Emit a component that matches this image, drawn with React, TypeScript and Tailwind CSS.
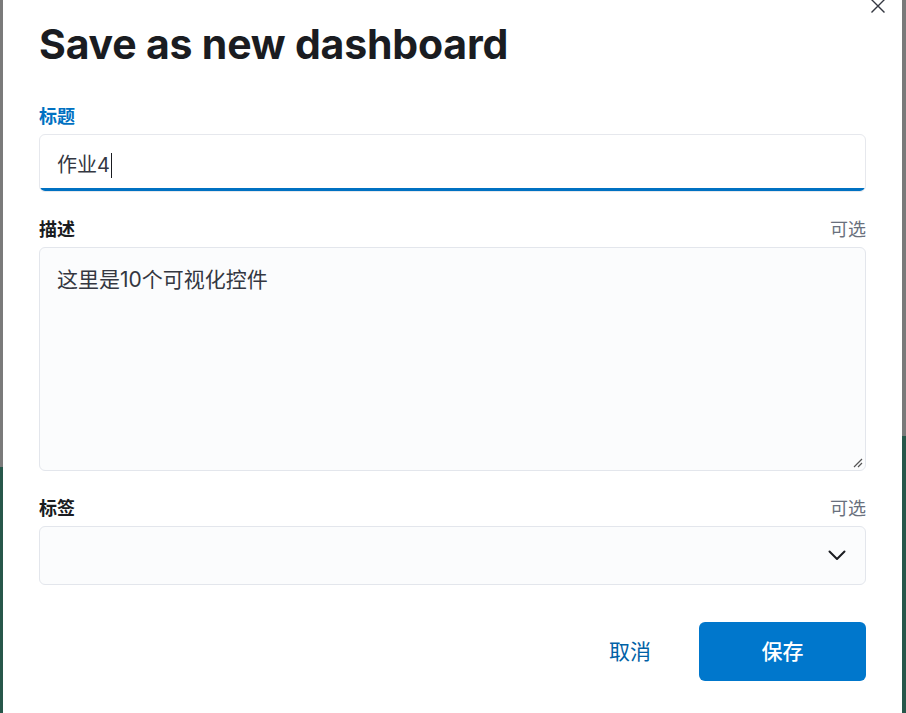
import React from "react";

const font = { fontFamily: "Inter, 'Noto Sans CJK SC', 'Noto Sans', sans-serif" };

export default function App() {
  return (
    <div className="w-[906px] h-[713px] flex overflow-hidden bg-white" style={font}>
      <div className="w-[3px] flex flex-col">
        <div className="h-[467px] bg-[#7a7a7a]" />
        <div className="flex-1 bg-[#27574a]" />
      </div>
      <div className="w-[899px] h-full bg-white relative px-[36px] pt-[20px]">
        <button className="absolute right-[16px] top-[-2px] w-[16px] h-[16px] flex items-center justify-center">
          <svg width="16" height="16" viewBox="0 0 16 16">
            <path d="M1.5 1.5 L14.5 14.5 M14.5 1.5 L1.5 14.5" stroke="#343741" strokeWidth="1.4" fill="none" />
          </svg>
        </button>
        <h1 className="text-[41px] leading-[48px] font-bold text-[#1a1c21] tracking-[-0.2px]">
          Save as new dashboard
        </h1>

        <div className="mt-[36px] h-[24px] flex items-center">
          <span className="text-[18px] font-bold text-[#0071c2]">标题</span>
        </div>
        <div className="mt-[6px] h-[58px] rounded-[6px] border border-[#e6e8ed] bg-white relative overflow-hidden flex items-center px-[17px] pt-[4px]">
          <span className="text-[20px] text-[#343741]">作业4</span>
          <span className="w-px h-[25px] bg-[#1a1c21] ml-[1px]" />
          <div className="absolute left-0 right-0 bottom-0 h-[3px] bg-[#0071c2]" />
        </div>

        <div className="mt-[25px] h-[24px] flex items-center justify-between">
          <span className="text-[18px] font-bold text-[#1a1c21]">描述</span>
          <span className="text-[18px] text-[#69707d]">可选</span>
        </div>
        <div className="mt-[6px] h-[224px] rounded-[6px] border border-[#e3e6ec] bg-[#fbfcfd] relative px-[17px] pt-[18px]">
          <span className="text-[21px] leading-[28px] text-[#343741]">这里是10个可视化控件</span>
          <svg className="absolute right-[2px] bottom-[2px]" width="12" height="12" viewBox="0 0 12 12">
            <path d="M11 3 L3 11 M11 7 L7 11" stroke="#555" strokeWidth="1.2" fill="none" />
          </svg>
        </div>

        <div className="mt-[25px] h-[24px] flex items-center justify-between">
          <span className="text-[18px] font-bold text-[#1a1c21]">标签</span>
          <span className="text-[18px] text-[#69707d]">可选</span>
        </div>
        <div className="mt-[6px] h-[59px] rounded-[6px] border border-[#e3e6ec] bg-[#fbfcfd] flex items-center justify-end pr-[19px]">
          <svg width="18" height="11" viewBox="0 0 18 11">
            <path d="M1.5 1.5 L9 9 L16.5 1.5" stroke="#1a1c21" strokeWidth="2" fill="none" strokeLinecap="round" strokeLinejoin="round" />
          </svg>
        </div>

        <div className="mt-[37px] flex justify-end items-center">
          <button className="h-[59px] px-[12px] text-[21px] text-[#0061a6] mr-[36px]">取消</button>
          <button className="h-[59px] w-[167px] rounded-[6px] bg-[#0077cc] text-white text-[21px] font-medium">保存</button>
        </div>
      </div>
      <div className="w-[4px] flex flex-col">
        <div className="h-[436px] bg-[#7a7a7a]" />
        <div className="flex-1 bg-[#27574a]" />
      </div>
    </div>
  );
}
